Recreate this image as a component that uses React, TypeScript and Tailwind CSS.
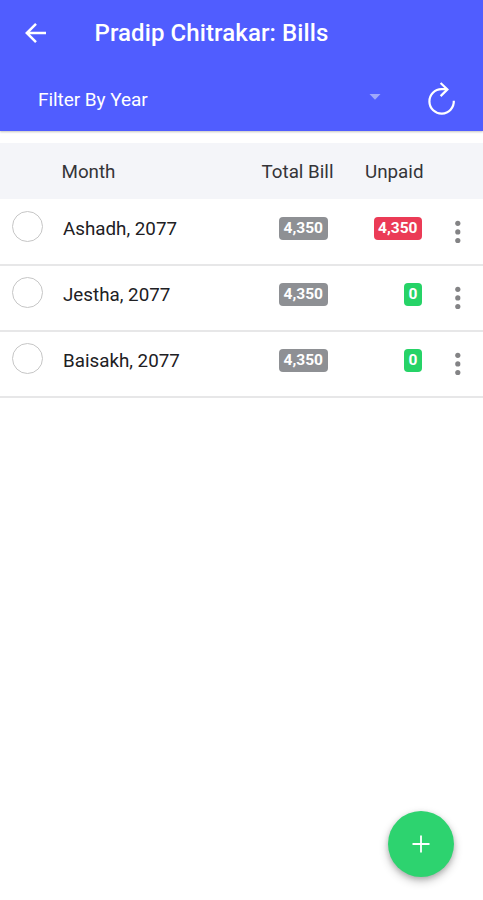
type Bill = { month: string; total: string; unpaid: string };

const bills: Bill[] = [
  { month: 'Ashadh, 2077', total: '4,350', unpaid: '4,350' },
  { month: 'Jestha, 2077', total: '4,350', unpaid: '0' },
  { month: 'Baisakh, 2077', total: '4,350', unpaid: '0' },
];

function Badge({ value, color }: { value: string; color: string }) {
  return (
    <span className={`flex h-[23px] items-start rounded-[4px] px-[4.5px] text-[15.5px] leading-[22px] font-bold text-white ${color}`}>
      {value}
    </span>
  );
}

function Header() {
  return (
    <header className="h-[131px] bg-[#505dff] text-white shadow-[0_1px_2px_rgba(60,60,50,0.3)]">
      <div className="flex h-[66px] items-center pl-[25px]">
        <svg width="22" height="22" viewBox="0 0 22 22" fill="none" stroke="currentColor" strokeWidth="2.5" className="shrink-0">
          <path d="M21 11H2.5M11 1.8L1.8 11l9.2 9.2" />
        </svg>
        <h1 className="ml-[47.5px] text-[24px] leading-[30px] font-medium tracking-[0.1px] whitespace-nowrap">
          Pradip Chitrakar: Bills
        </h1>
      </div>
      <div className="flex h-[65px] items-center pl-[38px]">
        <span className="mt-[2px] w-[331px] text-[19px] leading-[26px] tracking-[-0.05px] whitespace-nowrap">Filter By Year</span>
        <svg width="12" height="6" viewBox="0 0 12 6" className="-mt-[4px] shrink-0 text-[#a0a8fa]">
          <path d="M0.5 0h11L6 5.7z" fill="currentColor" />
        </svg>
        <svg width="30" height="34" viewBox="0 0 30 34" fill="none" stroke="currentColor" strokeWidth="2.2" className="mt-[1px] ml-[46px] shrink-0">
          <path d="M20.2 7.2h-5.6A12.2 12.2 0 1 0 26.8 18.8" />
          <path d="M13.6 1l6.8 6.4-6.8 6.7" />
        </svg>
      </div>
    </header>
  );
}

function Row({ bill }: { bill: Bill }) {
  return (
    <div className="flex h-[66px] items-start border-b-2 border-[#e7e7e8]">
      <span className="mt-[11px] ml-[12px] size-[31px] shrink-0 rounded-full border-[1.5px] border-[#c6c6c6]" />
      <span className="mt-[16px] ml-[20px] w-[165px] text-[18.8px] leading-[26px] whitespace-nowrap text-[#202023]">
        {bill.month}
      </span>
      <div className="mt-[17px] flex w-[99.5px] justify-end">
        <Badge value={bill.total} color="bg-[#8e9094]" />
      </div>
      <div className="mt-[17px] flex w-[94.5px] justify-end">
        <Badge value={bill.unpaid} color={bill.unpaid === '0' ? 'bg-[#26d367]' : 'bg-[#eb3b56]'} />
      </div>
      <svg width="8" height="24" viewBox="0 0 8 24" fill="#838385" className="mt-[20px] ml-[32px] shrink-0">
        <circle cx="3.8" cy="3.3" r="2.6" />
        <circle cx="3.8" cy="11.9" r="2.6" />
        <circle cx="3.8" cy="20.5" r="2.6" />
      </svg>
    </div>
  );
}

export default function App() {
  return (
    <div className="flex h-[900px] w-[483px] flex-col overflow-hidden bg-white font-[Roboto,sans-serif]">
      <Header />
      <main className="mt-[12px] grow">
        <div className="mb-px flex h-[56px] items-center bg-[#f4f5f9] pt-[2px] text-[18.8px] leading-[26px] whitespace-nowrap text-[#343438]">
          <span className="ml-[61.5px] w-[200px]">Month</span>
          <span className="w-[103.5px]">Total Bill</span>
          <span>Unpaid</span>
        </div>
        {bills.map((bill) => (
          <Row key={bill.month} bill={bill} />
        ))}
      </main>
      <button
        aria-label="Add bill"
        className="mr-[29px] mb-[23px] flex size-[66px] shrink-0 items-center justify-center self-end rounded-full bg-[#2dd36f] text-white shadow-[0_4px_10px_rgba(0,0,0,0.24),0_2px_5px_rgba(0,0,0,0.16)]"
      >
        <svg width="18" height="18" viewBox="0 0 18 18" fill="none" stroke="currentColor" strokeWidth="1.8">
          <path d="M9 0.5v17M0.5 9h17" />
        </svg>
      </button>
    </div>
  );
}
